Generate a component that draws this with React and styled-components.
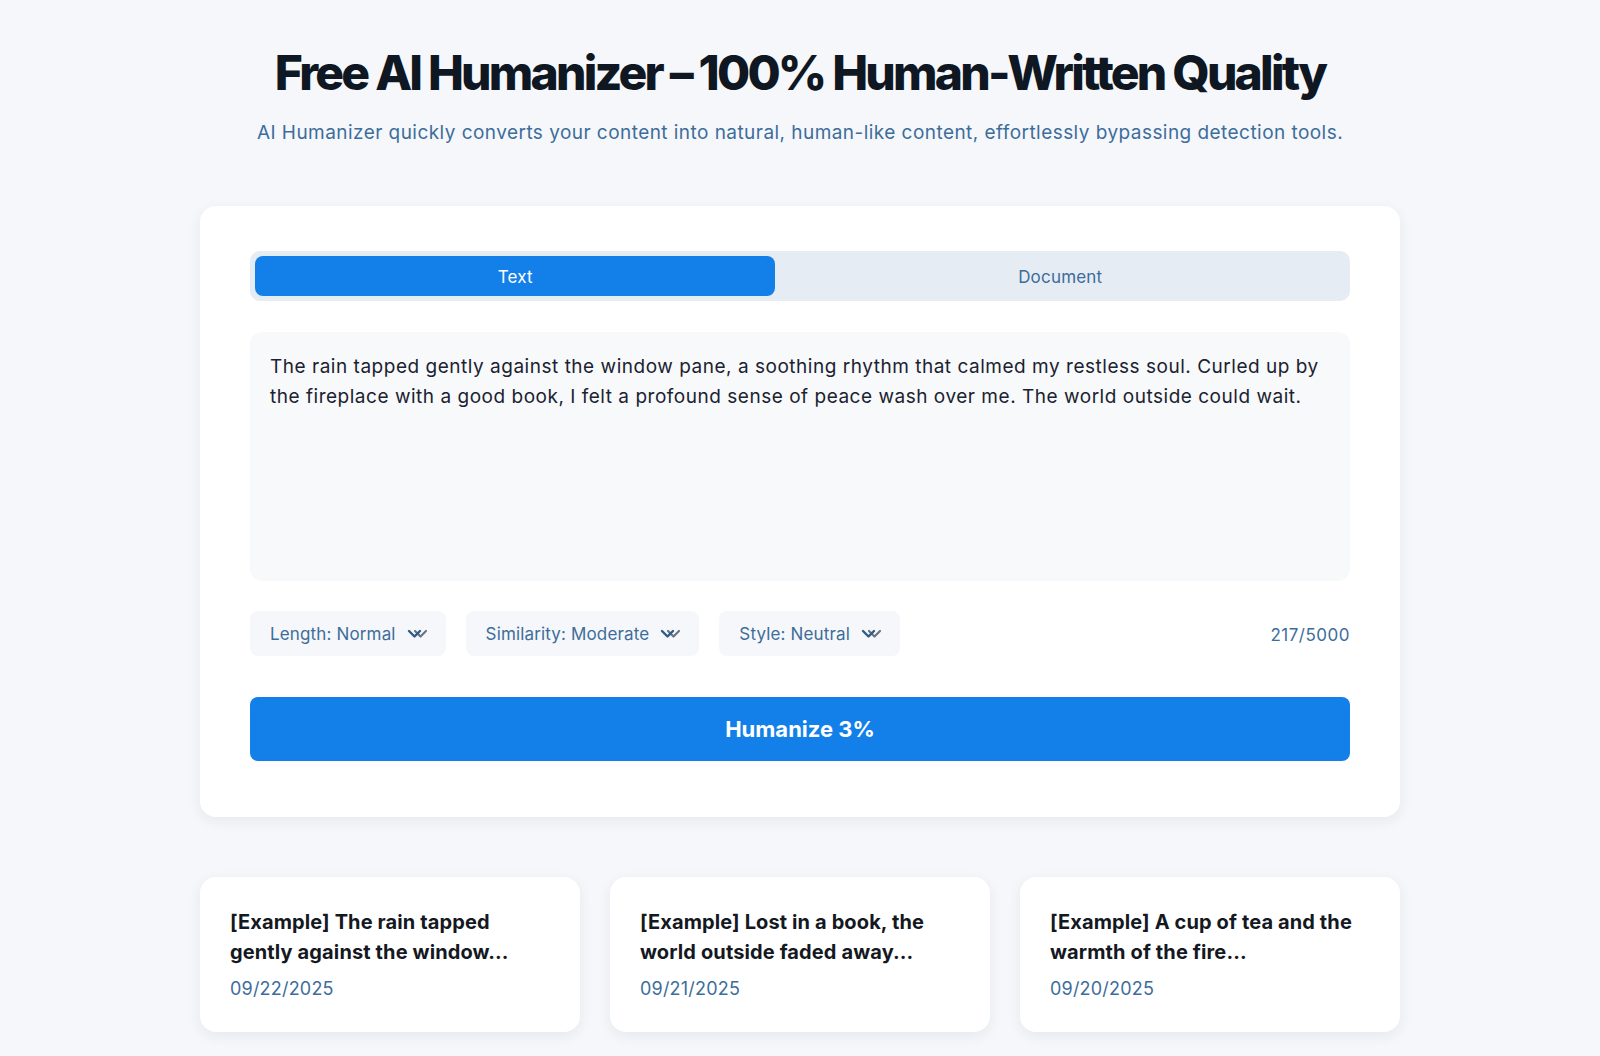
import React from "react";
import styled, { createGlobalStyle } from "styled-components";

const Global = createGlobalStyle`
  html, body { margin: 0; padding: 0; background: #f5f7fa; }
  body { font-family: Inter, "Noto Sans", sans-serif; }
  * { box-sizing: border-box; }
`;

const Page = styled.div`
  min-height: 1056px;
  padding: 44px 0 40px;
  display: flex;
  flex-direction: column;
  align-items: center;
`;

const Title = styled.h1`
  margin: 0;
  font-size: 48px;
  line-height: 58px;
  font-weight: 800;
  letter-spacing: -0.058em;
  color: #0f1722;
  text-align: center;
`;

const Subtitle = styled.p`
  margin: 17px 0 0;
  font-size: 19px;
  line-height: 28px;
  letter-spacing: 0.45px;
  color: #3d6d9a;
  text-align: center;
`;

const Card = styled.section`
  width: 1200px;
  margin-top: 59px;
  background: #fff;
  border-radius: 16px;
  box-shadow: 0 4px 14px rgba(20, 40, 70, 0.07);
  padding: 45px 50px 56px;
  display: flex;
  flex-direction: column;
`;

const Tabs = styled.div`
  display: flex;
  background: #e6ecf3;
  border-radius: 10px;
  padding: 5px;
  height: 50px;
`;

const Tab = styled.button`
  flex: 1 1 auto;
  border: none;
  border-radius: 8px;
  padding-top: 3px;
  font-family: inherit;
  font-size: 17px;
  letter-spacing: 0.2px;
  background: ${(p) => (p.$active ? "#1380ea" : "transparent")};
  color: ${(p) => (p.$active ? "#ffffff" : "#3d6d9a")};
  cursor: pointer;
`;

const TextBox = styled.div`
  margin-top: 31px;
  height: 249px;
  background: #f7f9fb;
  border-radius: 12px;
  padding: 20px 20px;
  font-size: 19px;
  line-height: 30px;
  letter-spacing: 0.52px;
  color: #1b2230;
`;

const Controls = styled.div`
  margin-top: 30px;
  display: flex;
  align-items: center;
  gap: 20px;
`;

const Select = styled.div`
  height: 45px;
  display: flex;
  align-items: center;
  gap: 10px;
  padding: 1px 16px 0 20px;
  background: #f5f7fa;
  border-radius: 8px;
  font-size: 17px;
  letter-spacing: 0.15px;
  color: #3d6d9a;
`;

const Count = styled.div`
  margin-left: auto;
  padding-top: 3px;
  font-size: 17px;
  letter-spacing: 0.5px;
  color: #3d6d9a;
`;

const Humanize = styled.button`
  margin-top: 41px;
  height: 64px;
  border: none;
  border-radius: 8px;
  background: #1380ea;
  color: #fff;
  font-family: inherit;
  font-size: 22px;
  font-weight: 700;
  cursor: pointer;
`;

const Examples = styled.div`
  width: 1200px;
  margin-top: 60px;
  display: grid;
  grid-template-columns: repeat(3, 1fr);
  gap: 30px;
`;

const ExampleCard = styled.div`
  background: #fff;
  border-radius: 16px;
  box-shadow: 0 4px 14px rgba(20, 40, 70, 0.07);
  padding: 30px 30px 30px;
  height: 155px;
`;

const ExampleTitle = styled.div`
  font-size: 20px;
  line-height: 30px;
  font-weight: 650;
  letter-spacing: 0.12px;
  color: #14181f;
`;

const ExampleDate = styled.div`
  margin-top: 10px;
  font-size: 18px;
  line-height: 24px;
  letter-spacing: 0.2px;
  color: #3d6d9a;
`;

const Chevrons = () => (
  <svg width="24" height="14" viewBox="0 0 24 14" fill="none">
    <path d="M9 4 L14.5 9.5 L20 4" stroke="#6b7480" strokeWidth="2.2" strokeLinecap="round" strokeLinejoin="round" />
    <path d="M3 4 L8.5 9.5 L14 4" stroke="#2e5b87" strokeWidth="2.4" strokeLinecap="round" strokeLinejoin="round" />
  </svg>
);

const examples = [
  ["[Example] The rain tapped gently against the window...", "09/22/2025"],
  ["[Example] Lost in a book, the world outside faded away...", "09/21/2025"],
  ["[Example] A cup of tea and the warmth of the fire...", "09/20/2025"],
];

export default function App() {
  return (
    <>
      <Global />
      <Page>
        <Title>Free AI Humanizer – 100% Human-Written Quality</Title>
        <Subtitle>
          AI Humanizer quickly converts your content into natural, human-like content, effortlessly bypassing detection tools.
        </Subtitle>
        <Card>
          <Tabs>
            <Tab $active>Text</Tab>
            <Tab>Document</Tab>
          </Tabs>
          <TextBox>
            The rain tapped gently against the window pane, a soothing rhythm that calmed my restless soul. Curled up by the fireplace with a good book, I felt a profound sense of peace wash over me. The world outside could wait.
          </TextBox>
          <Controls>
            <Select>Length: Normal <Chevrons /></Select>
            <Select>Similarity: Moderate <Chevrons /></Select>
            <Select>Style: Neutral <Chevrons /></Select>
            <Count>217/5000</Count>
          </Controls>
          <Humanize>Humanize 3%</Humanize>
        </Card>
        <Examples>
          {examples.map(([t, d]) => (
            <ExampleCard key={d}>
              <ExampleTitle>{t}</ExampleTitle>
              <ExampleDate>{d}</ExampleDate>
            </ExampleCard>
          ))}
        </Examples>
      </Page>
    </>
  );
}
